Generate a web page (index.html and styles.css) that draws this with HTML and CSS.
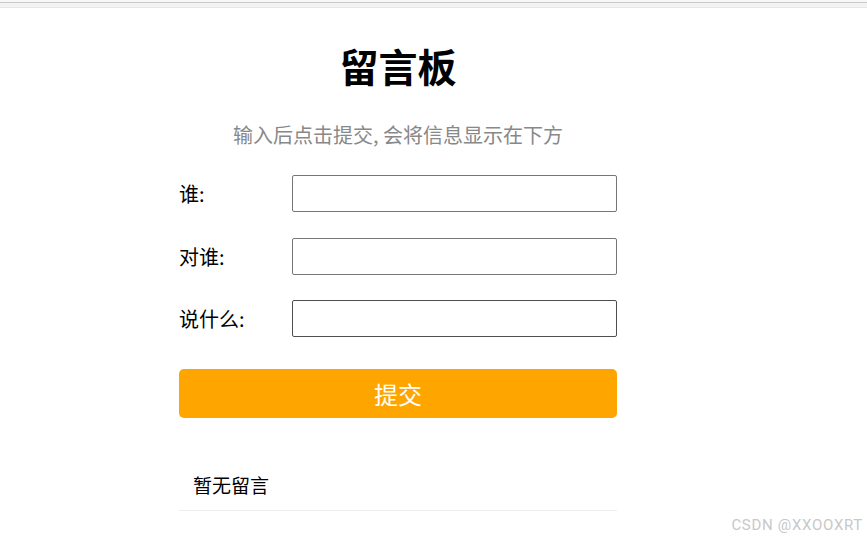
FILE: index.html
```html
<!DOCTYPE html>
<html lang="zh">
<head>
<meta charset="utf-8">
<title>留言板</title>
<link rel="stylesheet" href="styles.css">
</head>
<body>
<div class="topbar"></div>
<div class="board">
  <h1 class="title">留言板</h1>
  <p class="subtitle">输入后点击提交, 会将信息显示在下方</p>
  <div class="form">
    <div class="row"><label class="label">谁:</label><input class="field" type="text"></div>
    <div class="row"><label class="label">对谁:</label><input class="field" type="text"></div>
    <div class="row"><label class="label">说什么:</label><input class="field dark" type="text"></div>
  </div>
  <button class="submit">提交</button>
  <ul class="messages">
    <li class="message">暂无留言</li>
  </ul>
</div>
<div class="watermark">CSDN @XXOOXRT</div>
</body>
</html>
```
FILE: styles.css
```css
html, body {
  margin: 0;
  padding: 0;
  background: #fff;
}
body {
  font-family: "Noto Sans CJK SC", "Noto Sans", sans-serif;
  color: #000;
  width: 867px;
  height: 540px;
  overflow: hidden;
  position: relative;
}
.topbar {
  height: 8px;
  background: #f3f3f3;
  border-top: 2px solid #f7f7f7;
  border-bottom: 1px solid #e6e6e6;
  box-shadow: inset 0 1px 0 #c9c9c9;
  box-sizing: border-box;
}
.board {
  width: 438px;
  margin-left: 179px;
}
.title {
  margin: 34px 0 0;
  font-size: 39px;
  line-height: 47px;
  font-weight: 700;
  text-align: center;
}
.subtitle {
  margin: 34px 0 0;
  font-size: 20px;
  line-height: 24px;
  color: #888;
  text-align: center;
}
.form {
  margin-top: 28px;
  display: flex;
  flex-direction: column;
  gap: 25.5px;
}
.row {
  display: flex;
  align-items: center;
  height: 37px;
}
.label {
  width: 113px;
  font-size: 20px;
  box-sizing: border-box;
}
.field {
  flex: 1;
  height: 37px;
  box-sizing: border-box;
  border: 1px solid #767676;
  border-radius: 2px;
  margin: 0;
  padding: 0 6px;
  font-size: 16px;
  background: #fff;
}
.field.dark {
  border-color: #4f4f4f;
}
.submit {
  display: block;
  width: 100%;
  height: 49px;
  margin-top: 32px;
  border: none;
  border-radius: 5px;
  background: #ffa500;
  color: #fff;
  font-family: inherit;
  font-size: 24px;
  padding: 0;
}
.messages {
  list-style: none;
  margin: 42px 0 0;
  padding: 0;
}
.message {
  height: 50px;
  line-height: 50px;
  padding-left: 14px;
  font-size: 19px;
  border-bottom: 1px solid #eee;
}
.watermark {
  position: absolute;
  right: 4px;
  bottom: 6px;
  font-family: Roboto, "Liberation Sans", sans-serif;
  font-size: 15px;
  color: #c8c8c8;
  letter-spacing: 0.7px;
}
```
